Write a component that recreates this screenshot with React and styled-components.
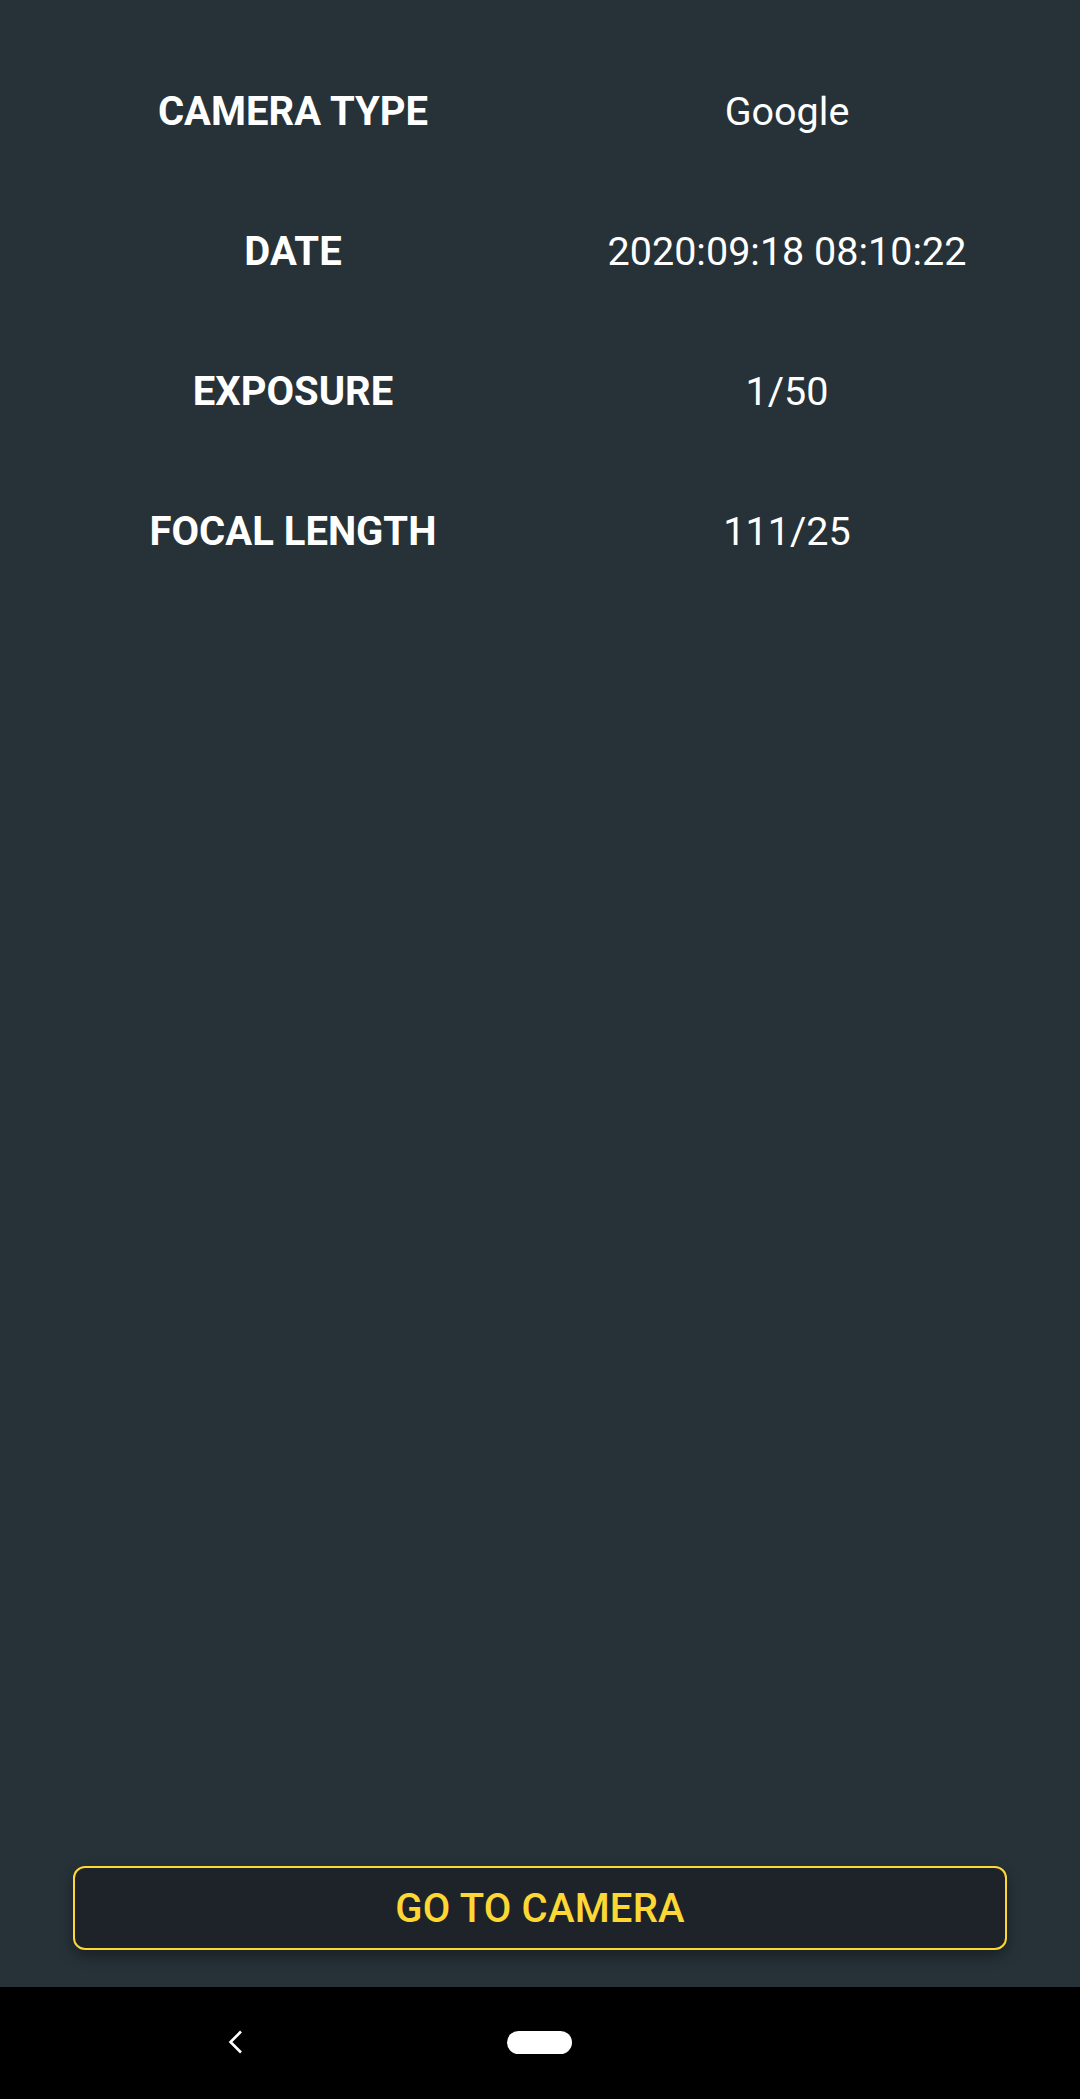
import React from 'react';
import styled, { createGlobalStyle } from 'styled-components';

const GlobalStyle = createGlobalStyle`
  html, body {
    margin: 0;
    padding: 0;
    background: #263238;
  }
  * {
    box-sizing: border-box;
  }
`

const Screen = styled.div`
  display: flex;
  flex-direction: column;
  min-height: 100vh;
  background-color: #263238;
  font-family: Roboto, "Noto Sans", sans-serif;
  color: #ffffff;
`

const InfoList = styled.div`
  flex: 1;
  padding: 42px 46px 0;
`

const InfoRow = styled.div`
  display: grid;
  grid-template-columns: 1fr 1fr;
  align-items: center;
  height: 140px;
`

const Label = styled.div`
  text-align: center;
  font-size: 40px;
  line-height: 46px;
  font-weight: 700;
`

const Value = styled.div`
  text-align: center;
  font-size: 39.5px;
  line-height: 46px;
  font-weight: 400;
`

const ButtonWrapper = styled.div`
  padding: 0 73px 37px 73px;
`

const CameraButton = styled.button`
  display: flex;
  align-items: center;
  justify-content: center;
  width: 100%;
  height: 84px;
  background-color: #1e2329;
  border: 2px solid #fdd835;
  border-radius: 12px;
  box-shadow: 0 6px 14px rgba(0,0,0,0.35);
  color: #fdd835;
  font-family: Roboto, "Noto Sans", sans-serif;
  font-size: 40px;
  font-weight: 500;
  letter-spacing: 0.2px;
  padding: 0;
`

const NavBar = styled.div`
  display: flex;
  align-items: center;
  height: 112px;
  background-color: #000000;
  padding-left: 226px;
  padding-bottom: 2px;
`

const BackButton = styled.div`
  display: flex;
  width: 20px;
  height: 24px;
`

const HomePill = styled.div`
  width: 65px;
  height: 23px;
  margin-left: 261px;
  border-radius: 12px;
  background-color: #ffffff;
`

const info = [
  { label: 'CAMERA TYPE', value: 'Google' },
  { label: 'DATE', value: '2020:09:18 08:10:22' },
  { label: 'EXPOSURE', value: '1/50' },
  { label: 'FOCAL LENGTH', value: '111/25' },
]

const App = () => (
  <Screen>
    <GlobalStyle />
    <InfoList>
      {info.map(item => (
        <InfoRow key={item.label}>
          <Label>{item.label}</Label>
          <Value>{item.value}</Value>
        </InfoRow>
      ))}
    </InfoList>
    <ButtonWrapper>
      <CameraButton>GO TO CAMERA</CameraButton>
    </ButtonWrapper>
    <NavBar>
      <BackButton>
        <svg width="20" height="24" viewBox="0 0 20 24">
          <path d="M15 1.5 L4.5 12 L15 22.5" fill="none" stroke="#fff" strokeWidth="2.6" />
        </svg>
      </BackButton>
      <HomePill />
    </NavBar>
  </Screen>
)

export default App
